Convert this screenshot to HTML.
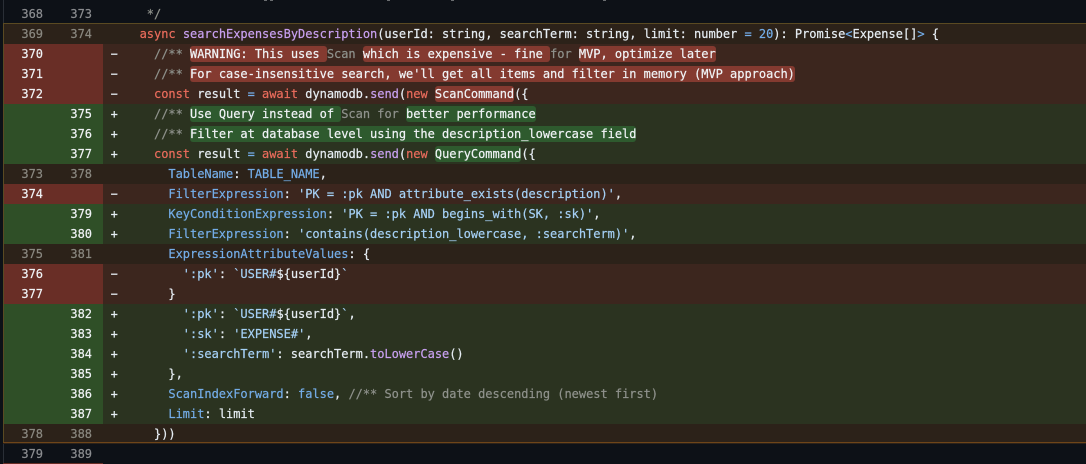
<!DOCTYPE html>
<html>
<head>
<meta charset="utf-8">
<style>
html,body{margin:0;padding:0;background:#0d1117;}
body{width:1086px;height:464px;position:relative;overflow:hidden;font-family:"DejaVu Sans Mono","Liberation Mono",monospace;font-size:12px;line-height:20px;color:#e6edf3;letter-spacing:-0.024px;-webkit-text-stroke:0.2px;}
.r{position:absolute;left:3px;right:0;height:20px;white-space:pre;}
.g{position:absolute;left:0;top:0;width:100px;height:20px;}
.n{position:absolute;top:0;width:30px;text-align:right;color:#8b8b8b;}
.a{left:10px}.b{left:59px}
.s{position:absolute;left:107.6px;top:0;}
.c{position:absolute;left:122.2px;top:0;}
.ctx .n{color:#8b8d90}
.hl{background:#2c2219}
.hl .n{color:#8a8880}
.del{background:#3c261e}.del .g{background:#692e26}.del .n,.add .n{color:#f0f3f6}
.add{background:#2b3320}.add .g{background:#2f4f27}
i{font-style:normal}
.k{color:#ea6c5c}.f{color:#c8a0f0}.v{color:#74ade8}.t{color:#a5d0f5}.m{color:#8f928c}
.x,.y{border-radius:3px;color:#f0f3f6;padding:1px 0}
.x{background:#843a30}.y{background:#2e5a2e}
.mk{position:absolute;top:0;width:3px;height:1px;background:#6a6d70}
</style>
</head>
<body>
<div style="position:absolute;left:3px;top:0;width:1px;height:464px;background:#2a2f36"></div>
<div class="mk" style="left:264px"></div><div class="mk" style="left:270px"></div><div class="mk" style="left:387px"></div><div class="mk" style="left:451px"></div><div class="mk" style="left:603px"></div>

<div class="r ctx" style="top:4px"><i class="n a">368</i><i class="n b">373</i><span class="c">   <i class="m">*/</i></span></div>
<div class="r hl" style="top:24px"><i class="n a">369</i><i class="n b">374</i><span class="c">  <i class="k">async</i> <i class="f">searchExpensesByDescription</i>(userId: string, searchTerm: string, limit: number <i class="v">=</i> <i class="v">20</i>): Promise<i class="v">&lt;</i>Expense[]<i class="v">&gt;</i> {</span></div>
<div class="r del" style="top:44px"><div class="g"></div><i class="n a">370</i><span class="s">−</span><span class="c">    <i class="m">//** </i><i class="x">WARNING: This uses </i><i class="m">Scan </i><i class="x">which is expensive - fine </i><i class="m">for </i><i class="x">MVP, optimize later</i></span></div>
<div class="r del" style="top:64px"><div class="g"></div><i class="n a">371</i><span class="s">−</span><span class="c">    <i class="m">//** </i><i class="x">For case-insensitive search, we'll get all items and filter in memory (MVP approach)</i></span></div>
<div class="r del" style="top:84px"><div class="g"></div><i class="n a">372</i><span class="s">−</span><span class="c">    <i class="k">const</i> result <i class="v">=</i> <i class="k">await</i> dynamodb.<i class="f">send</i>(<i class="k">new</i> <i class="x">ScanCommand</i>({</span></div>
<div class="r add" style="top:104px"><div class="g"></div><i class="n b">375</i><span class="s">+</span><span class="c">    <i class="m">//** </i><i class="y">Use Query instead of </i><i class="m">Scan for </i><i class="y">better performance</i></span></div>
<div class="r add" style="top:124px"><div class="g"></div><i class="n b">376</i><span class="s">+</span><span class="c">    <i class="m">//** </i><i class="y">Filter at database level using the description_lowercase field</i></span></div>
<div class="r add" style="top:144px"><div class="g"></div><i class="n b">377</i><span class="s">+</span><span class="c">    <i class="k">const</i> result <i class="v">=</i> <i class="k">await</i> dynamodb.<i class="f">send</i>(<i class="k">new</i> <i class="y">QueryCommand</i>({</span></div>
<div class="r hl" style="top:164px"><i class="n a">373</i><i class="n b">378</i><span class="c">      <i class="v">TableName</i>: <i class="v">TABLE_NAME</i>,</span></div>
<div class="r del" style="top:184px"><div class="g"></div><i class="n a">374</i><span class="s">−</span><span class="c">      <i class="v">FilterExpression</i>: <i class="t">'PK = :pk AND attribute_exists(description)'</i>,</span></div>
<div class="r add" style="top:204px"><div class="g"></div><i class="n b">379</i><span class="s">+</span><span class="c">      <i class="v">KeyConditionExpression</i>: <i class="t">'PK = :pk AND begins_with(SK, :sk)'</i>,</span></div>
<div class="r add" style="top:224px"><div class="g"></div><i class="n b">380</i><span class="s">+</span><span class="c">      <i class="v">FilterExpression</i>: <i class="t">'contains(description_lowercase, :searchTerm)'</i>,</span></div>
<div class="r hl" style="top:244px"><i class="n a">375</i><i class="n b">381</i><span class="c">      <i class="v">ExpressionAttributeValues</i>: {</span></div>
<div class="r del" style="top:264px"><div class="g"></div><i class="n a">376</i><span class="s">−</span><span class="c">        <i class="t">':pk'</i>: <i class="t">`USER#</i>${userId}<i class="t">`</i></span></div>
<div class="r del" style="top:284px"><div class="g"></div><i class="n a">377</i><span class="s">−</span><span class="c">      }</span></div>
<div class="r add" style="top:304px"><div class="g"></div><i class="n b">382</i><span class="s">+</span><span class="c">        <i class="t">':pk'</i>: <i class="t">`USER#</i>${userId}<i class="t">`</i>,</span></div>
<div class="r add" style="top:324px"><div class="g"></div><i class="n b">383</i><span class="s">+</span><span class="c">        <i class="t">':sk'</i>: <i class="t">'EXPENSE#'</i>,</span></div>
<div class="r add" style="top:344px"><div class="g"></div><i class="n b">384</i><span class="s">+</span><span class="c">        <i class="t">':searchTerm'</i>: searchTerm.<i class="f">toLowerCase</i>()</span></div>
<div class="r add" style="top:364px"><div class="g"></div><i class="n b">385</i><span class="s">+</span><span class="c">      },</span></div>
<div class="r add" style="top:384px"><div class="g"></div><i class="n b">386</i><span class="s">+</span><span class="c">      <i class="v">ScanIndexForward</i>: <i class="v">false</i>, <i class="m">//** Sort by date descending (newest first)</i></span></div>
<div class="r add" style="top:404px"><div class="g"></div><i class="n b">387</i><span class="s">+</span><span class="c">      <i class="v">Limit</i>: limit</span></div>
<div class="r hl" style="top:424px"><i class="n a">378</i><i class="n b">388</i><span class="c">    }))</span></div>
<div class="r ctx" style="top:444px"><i class="n a">379</i><i class="n b">389</i></div>

<div style="position:absolute;left:3px;right:0;top:23px;height:1px;background:#5a4a22"></div>
<div style="position:absolute;left:3px;top:23px;width:1px;height:420px;background:#5a4a22"></div>
<div style="position:absolute;left:3px;right:0;top:442px;height:1px;background:#6e4519"></div>
<div style="position:absolute;left:3px;width:100px;top:463px;height:1px;background:#692e26"></div>
</body>
</html>
